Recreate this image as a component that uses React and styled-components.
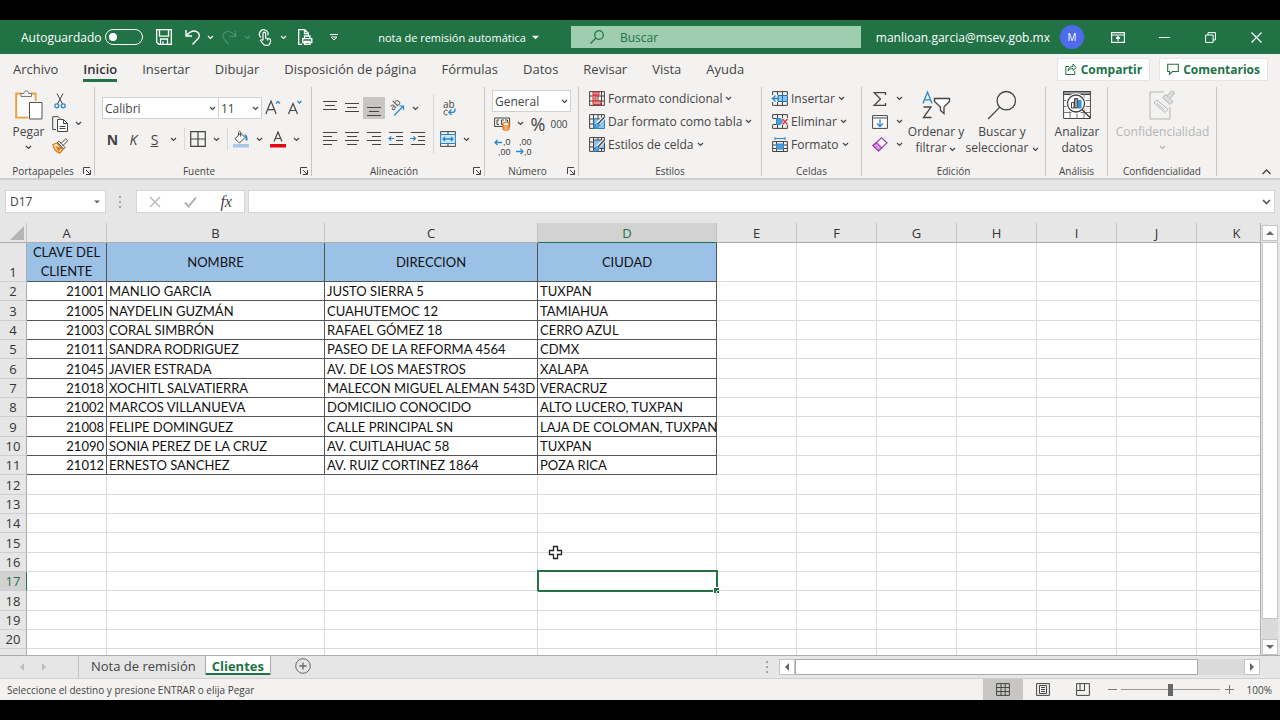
import React, { useState } from "react";
import styled, { createGlobalStyle, css } from "styled-components";

const GREEN = "#217346";
const BLUE = "#2b88c8";
const INK = "#444";

const COLUMNS = [
  { name: "A", width: 80 },
  { name: "B", width: 218 },
  { name: "C", width: 213 },
  { name: "D", width: 179 },
  { name: "E", width: 80 },
  { name: "F", width: 80 },
  { name: "G", width: 80 },
  { name: "H", width: 80 },
  { name: "I", width: 80 },
  { name: "J", width: 80 },
  { name: "K", width: 80 },
];

const HEADINGS = ["CLAVE DEL CLIENTE", "NOMBRE", "DIRECCION", "CIUDAD"];

const CLIENTS = [
  ["21001", "MANLIO GARCIA", "JUSTO SIERRA 5", "TUXPAN"],
  ["21005", "NAYDELIN GUZMÁN", "CUAHUTEMOC 12", "TAMIAHUA"],
  ["21003", "CORAL SIMBRÓN", "RAFAEL GÓMEZ 18", "CERRO AZUL"],
  ["21011", "SANDRA RODRIGUEZ", "PASEO DE LA REFORMA 4564", "CDMX"],
  ["21045", "JAVIER ESTRADA", "AV. DE LOS MAESTROS", "XALAPA"],
  ["21018", "XOCHITL SALVATIERRA", "MALECON MIGUEL ALEMAN 543D", "VERACRUZ"],
  ["21002", "MARCOS VILLANUEVA", "DOMICILIO CONOCIDO", "ALTO LUCERO, TUXPAN"],
  ["21008", "FELIPE DOMINGUEZ", "CALLE PRINCIPAL SN", "LAJA DE COLOMAN, TUXPAN"],
  ["21090", "SONIA PEREZ DE LA CRUZ", "AV. CUITLAHUAC 58", "TUXPAN"],
  ["21012", "ERNESTO SANCHEZ", "AV. RUIZ CORTINEZ 1864", "POZA RICA"],
];

const ROW_COUNT = 21;
const MENU = [
  "Archivo",
  "Inicio",
  "Insertar",
  "Dibujar",
  "Disposición de página",
  "Fórmulas",
  "Datos",
  "Revisar",
  "Vista",
  "Ayuda",
];

/* ---------- icons ---------- */

const Icon = ({ w = 16, h = 16, box, color = INK, sw = 1, children }) => (
  <svg
    width={w}
    height={h}
    viewBox={box || `0 0 ${w} ${h}`}
    fill="none"
    stroke={color}
    strokeWidth={sw}
    aria-hidden="true"
  >
    {children}
  </svg>
);

const Chevron = ({ color = INK }) => (
  <Icon w={7} h={5} color={color} sw={1.2}>
    <path d="M1 1l2.500 2.500L6 1" />
  </Icon>
);

const SaveIcon = () => (
  <Icon color="#fff" sw={1.3}>
    <path d="M.7.7h14.600v14.600H2.700l-2-2zM3.500.7v6.500h9V.7M4.500 15v-5h7v5M7 12.500V15" />
  </Icon>
);

const UndoIcon = () => (
  <Icon color="#fff" sw={1.4}>
    <path d="M1 1v6h6M1.300 6.700C5 2.500 9 1 12 2.800c3 1.900 3 5 .5 7.500L7.500 15.500" />
  </Icon>
);

const RedoIcon = () => (
  <Icon color="#4f9470" sw={1.2}>
    <path d="M14.500 1.500v6h-6M14.300 7C11 3 7.500 1.500 4.300 3.300c-3 1.900-3 5-.5 7.500L7.500 15" />
  </Icon>
);

const TouchIcon = () => (
  <Icon w={14} h={17} color="#fff" sw={1.2}>
    <path d="M3 8.500A4.300 4.300 0 1 1 9.800 6.500M5 11V4.500a1.300 1.300 0 0 1 2.600 0V9l4 .9c1 .3 1.200 1 1 2l-.6 2.400c-.4 1.300-1.200 2-2.500 2H7.600c-1 0-1.700-.4-2.300-1.200L2.400 11.500c.6-1 1.600-1 2.600 0M9.500 9.500v2" />
  </Icon>
);

const PrintIcon = () => (
  <Icon color="#fff" sw={1.3}>
    <path d="M5 15.300H1.700V.7h6l3.600 3.600V6.500M7.500.7v4h3.800M7.500 9.700V7H13v2.700M5.800 9.700h9v4h-9zM7.500 12.500v2.800H13v-2.800z" />
  </Icon>
);

const SearchIcon = ({ size = 14, color = GREEN, sw = 1.2 }) => (
  <Icon w={size} h={size} box="0 0 14 14" color={color} sw={sw}>
    <circle cx="9" cy="5" r="4.300" />
    <path d="M6 8L.5 13.500" />
  </Icon>
);

const RibbonDisplayIcon = () => (
  <Icon w={14} h={11} color="#fff" sw={1.2}>
    <path d="M.6.6h12.800v9.800H.6zM.6 3h12.800M7 9V4.500M5 6.500l2-2 2 2" />
  </Icon>
);

const ShareIcon = () => (
  <Icon w={12} h={12} color={GREEN}>
    <path d="M4 3.500H.8v8h9V8M3 8c.3-3 2-4.500 5-4.500V1l3.300 3.500L8 7.500V5.500C5.500 5.500 4 6.300 3 8z" />
  </Icon>
);

const CommentIcon = () => (
  <Icon w={12} h={12} color={GREEN} sw={1.1}>
    <path d="M.7 1.200h10.600v7.300H5.500l-3 2.700V8.500H.7z" />
  </Icon>
);

const PasteIcon = () => (
  <Icon w={28} h={32}>
    <path d="M6 4.500H1.200v24H13" stroke="#e9a13b" strokeWidth="2" />
    <path d="M16 4.500h4.500V12" stroke="#e9a13b" strokeWidth="2" />
    <path d="M2.500 6h17v6H13v15.500H2.500z" fill="#fbfbfb" stroke="none" />
    <path d="M6 7.500v-3h3c0-3.500 4.500-3.500 4.500 0h3v3z" fill="#f4f4f4" stroke="#777" />
    <path d="M14.500 13.500h12.500v16.500H14.500z" fill="#fff" stroke="#555" />
  </Icon>
);

const CutIcon = () => (
  <Icon w={12} h={16}>
    <path d="M3 .5l5.500 10.500M9 .5L3.500 11" />
    <circle cx="2.800" cy="12.800" r="2" stroke={BLUE} strokeWidth="1.300" />
    <circle cx="9.200" cy="12.800" r="2" stroke={BLUE} strokeWidth="1.300" />
  </Icon>
);

const CopyIcon = () => (
  <Icon w={16} h={16}>
    <path d="M4 13.500H.7V.7h5.500l2 2" />
    <path d="M5.500 3.500h6l4 4v8h-10zM11.500 3.500v4h4M7.500 10.500h6M7.500 12.500h6" fill="#fff" />
  </Icon>
);

const BrushIcon = () => (
  <Icon w={17} h={16}>
    <path d="M1 6.500l4-1.500 6 6.500-3 3.500c-3-.5-6-4-7-8.500z" fill="#fbe3c8" stroke="#e07b1a" strokeWidth="1.300" />
    <path d="M3.500 8l6 2-3 4z" fill="#e07b1a" stroke="none" />
    <path d="M5.500 4.500l1.500-1.300 6 6.300-1.500 1.500zM9 5.500L13.700.8l2 2L11 7.500" fill="#fff" />
  </Icon>
);

const GrowFontIcon = ({ shrink }) => (
  <Icon w={16} h={16}>
    <path
      d={shrink ? "M1.500 14L6 3.500 10.500 14M3 10.500h6" : "M.8 14L6 1l5.200 13M2.600 9.700h6.800"}
      strokeWidth="1.200"
    />
    <path d={shrink ? "M10.500 1l2 2 2-2" : "M11 3.500l2-2 2 2"} stroke={BLUE} strokeWidth="1.300" />
  </Icon>
);

const BordersIcon = () => (
  <Icon sw={1.2}>
    <path d="M.7.7h14.600v14.600H.7zM8 .7v14.600M.7 8h14.600" />
  </Icon>
);

const FillIcon = () => (
  <Icon w={18} h={17}>
    <path d="M8.500 2L3 7.800l4.500 4.200L13 6.500zM6.500 4V1.500c0-1.300 2.200-1.300 2.200 0v4" fill="#fff" />
    <path d="M12.500 4.500c2-.3 2.300 2.500 2 5" stroke={BLUE} strokeWidth="2" />
    <path d="M1 13h16v3.500H1z" fill="#a9c7e8" stroke="none" />
  </Icon>
);

const FontColorIcon = () => (
  <Icon w={16} h={17}>
    <path d="M4 10.500L8 1l4 9.500M5.300 7.500h5.400" strokeWidth="1.200" />
    <path d="M0 13h16v3.500H0z" fill="#e30613" stroke="none" />
  </Icon>
);

const LINES = {
  top: ["M1 1.500h14", "M3 5.500h10", "M1 9.500h14"],
  middle: ["M1 3.500h14", "M3 7.500h10", "M1 11.500h14"],
  bottom: ["M1 7.500h14", "M3 11.500h10", "M1 15.500h14"],
  left: ["M1 1.500h14", "M1 5.500h9", "M1 9.500h14", "M1 13.500h9"],
  center: ["M1 1.500h14", "M3 5.500h10", "M1 9.500h14", "M3 13.500h10"],
  right: ["M1 1.500h14", "M6 5.500h9", "M1 9.500h14", "M6 13.500h9"],
  outdent: ["M1 1.500h14", "M8 5.500h7", "M8 9.500h7", "M1 13.500h14"],
  indent: ["M1 1.500h14", "M8 5.500h7", "M8 9.500h7", "M1 13.500h14"],
};

const LinesIcon = ({ kind }) => (
  <Icon sw={1.2}>
    <path d={LINES[kind].join("")} />
    {kind === "outdent" && <path d="M6.500 7.500H1M3.200 5.300L1 7.500l2.200 2.200" stroke={BLUE} />}
    {kind === "indent" && <path d="M0 7.500h5.500M3.300 5.300L5.500 7.500l-2.200 2.200" stroke={BLUE} />}
  </Icon>
);

const OrientationIcon = () => (
  <Icon w={17} h={16}>
    <text transform="translate(5 11) rotate(-45)" fontSize="10" fill={INK} stroke="none">
      ab
    </text>
    <path d="M6 15.500L15.500 6M11.500 6h4v4" stroke={BLUE} strokeWidth="1.200" />
  </Icon>
);

const WrapIcon = () => (
  <Icon w={16} h={17}>
    <text x="2" y="8" fontSize="10" fill={INK} stroke="none">
      ab
    </text>
    <path d="M6.500 10.500c-1.500-1-3.500-.3-3.500 2s2 3 3.500 2" />
    <path d="M14 8.500v1.500c0 1.500-1 2.300-2.500 2.300H8M10.500 9.500l-2.700 2.800L10.500 15" stroke={BLUE} strokeWidth="1.300" />
  </Icon>
);

const MergeIcon = () => (
  <Icon>
    <path d="M.6 3.500h14.800v9H.6z" fill="#cfe6f7" stroke={BLUE} />
    <path d="M.6 3.500V.6h14.800v2.900M8 .6v2.900M.6 12.500v2.900h14.800v-2.900M8 12.500v2.900" />
    <path d="M3 8h10M5 6L3 8l2 2M11 6l2 2-2 2" stroke={BLUE} strokeWidth="1.300" />
  </Icon>
);

const MoneyIcon = () => (
  <Icon w={17} h={14}>
    <path d="M.6 1h15v8.500H.6z" />
    <path d="M5 3H3v4.500h2M10 3H7.500v4.500H9M11 3h2.500v2" />
    <path d="M9 6.500c0-1.500 6-1.500 6 0v5.500c0 1.500-6 1.500-6 0z" fill="#fff" stroke="#e07b1a" strokeWidth="1.300" />
    <path d="M9 8.300c1 1 5 1 6 0M9 10.300c1 1 5 1 6 0" stroke="#e07b1a" strokeWidth="1.300" />
  </Icon>
);

const DecimalIcon = ({ more }) => (
  <Icon w={17} h={18}>
    <SmallText x={more ? 9 : 4} y="7">
      {more ? ",0" : ",00"}
    </SmallText>
    <SmallText x={more ? 4 : 9} y="17">
      {more ? ",00" : ",0"}
    </SmallText>
    <path
      d={more ? "M8 4.500H1M3.500 2L1 4.500 3.500 7" : "M1 13.500h7M5.500 11L8 13.500 5.500 16"}
      stroke={BLUE}
      strokeWidth="1.300"
    />
  </Icon>
);

const GridLines = () => (
  <path d="M.6.6h14.800v13.800H.6zM.6 5h14.800M.6 10h14.800M4.500.6v13.800M9 .6v13.800M12.500.6v13.800" />
);

const CondFormatIcon = () => (
  <Icon w={16} h={15}>
    <GridLines />
    <path d="M4 1h6v3H4zM4 4h3v6H4zM4 10h8v3.500H4z" fill="#f08a8f" stroke="#d13438" />
  </Icon>
);

const TableFormatIcon = ({ full }) => (
  <Icon w={16} h={15}>
    <GridLines />
    <path
      d={full ? "M4.500 3h11v8.500h-11z" : "M5 5h10.500v9.500H5z"}
      fill="#8fc2ea"
      stroke={full ? INK : BLUE}
    />
    <path d="M15.500 3L7 11.500" stroke="#fff" strokeWidth="3.500" />
    <path d="M15.500 3L8.500 10.500" strokeWidth="1.500" />
    <path d="M9 9.500c-2-.5-3 1-3 2.500 0 1-.7 1.500-1.500 2 3 .7 5.500-.8 6-3z" fill="#5aa5dd" stroke={BLUE} />
  </Icon>
);

const CellsIcon = ({ kind }) => (
  <Icon w={16} h={15}>
    {kind === "format" ? (
      <>
        <path d="M.6 4.500h14.800v10H.6zM4.500 4.500v10M11.500 4.500v10M.6 8h14.800M.6 11.500h14.800" />
        <path d="M4.500 7h7v5h-7z" fill="#4ba0e0" stroke={BLUE} />
        <path d="M3 1.500h10M3 0v3M13 0v3" stroke={BLUE} />
      </>
    ) : (
      <>
        <path d="M.6 4V.6h14.800V4M5.500.6V4M10.500.6V4M.6 11v3.400h14.800V11M5.500 11v3.400M10.500 11v3.400" />
        {kind === "insert" ? (
          <>
            <path d="M6 4.500h9.400v6H6zM10.500 4.500v6" fill="#8cc4f0" stroke="#1c6fb0" />
            <path d="M7 7.500H.5M3.500 4.500l-3 3 3 3" stroke={BLUE} strokeWidth="1.300" />
          </>
        ) : (
          <>
            <path d="M.6 4.500h4M.6 10.500h4" />
            <path d="M4.500 4.500h4l2 3-2 3h-4z" fill="#4ba0e0" stroke={BLUE} />
            <path d="M10.500 5l5 5.500M15.500 5l-5 5.500" stroke="#e0393e" strokeWidth="1.400" />
          </>
        )}
      </>
    )}
  </Icon>
);

const SumIcon = () => (
  <Icon w={14} h={14} sw={1.3}>
    <path d="M12.500 3V.7H1.200L7.500 7l-6.300 6.300h11.300V11" />
  </Icon>
);

const FillDownIcon = () => (
  <Icon w={16} h={14}>
    <path d="M.6.6h14.800v12.800H.6zM.6 3h14.800" fill="#fff" />
    <path d="M8 4.500v7M5 8.500l3 3 3-3" stroke={BLUE} strokeWidth="1.300" />
  </Icon>
);

const EraserIcon = () => (
  <Icon w={16} h={15} color="#9a3fb0" sw={1.2}>
    <path d="M1 8.500L9.500.8l5.500 5-8.500 8.200z" fill="#fff" />
    <path d="M1 8.500l3.500-3L9.800 11l-3.300 3z" fill="#dc9be6" />
  </Icon>
);

const SortIcon = () => (
  <Icon w={28} h={28} sw={1.3}>
    <path d="M1 12.500L5.500 1 10 12.500M2.500 8.800h6" stroke={BLUE} />
    <path d="M1.500 16h7.500L1.500 26.500h8" />
    <path d="M12.500 7.500h15v3L22 16v6.500l-3.500-3V16l-6-5.500z" fill="#fff" />
  </Icon>
);

const AnalyzeIcon = () => (
  <Icon w={28} h={29}>
    <path d="M.6 1h26.800v27H.6z" fill="#fff" />
    <path d="M.6 1h26.800v3H.6z" fill="#999" />
    <path d="M.6 10h26.800M.6 16h26.800M.6 22h26.800M7 4v24M14 4v24M21 4v24" stroke="#777" />
    <circle cx="13" cy="13" r="8.700" fill="#fff" stroke="#fff" strokeWidth="3" />
    <circle cx="13" cy="13" r="8.500" fill="#fff" strokeWidth="1.300" />
    <path d="M19 19l8.500 8.500" strokeWidth="1.500" />
    <path d="M8.500 12h2.500v5.500H8.500z" />
    <path d="M11.500 8h3v9.500h-3z" fill="#9a9a9a" />
    <path d="M15 10h3v7.500h-3z" fill="#3f97d8" stroke={BLUE} />
  </Icon>
);

const SensitivityIcon = () => (
  <Icon w={28} h={30} color="#b5b5b5">
    <path d="M15 2H1v27h20V17" />
    <path d="M5 13l3-3 11 9.500-3 3zM8 13.500l7.500 6.500" />
    <path d="M13.500 7.500l3-3 7.500 7-3 3z" fill="#ddd" />
    <path d="M18 6l4-4.500c2-1 4 .5 3 2.500l-4 4.500" fill="#ddd" />
  </Icon>
);

const LauncherIcon = () => (
  <Icon w={8} h={8}>
    <path d="M.5 7V.5H7M3 3l4 4M7.500 3v4.500H3" />
  </Icon>
);

const ViewIcon = ({ kind }) => (
  <Icon w={14} h={13}>
    <path d="M.6.6h12.800v11.800H.6z" />
    {kind === "normal" && <path d="M.6 4.500h12.800M.6 8.500h12.800M5 .6v11.800M9.200.6v11.800" />}
    {kind === "page" && <path d="M3.500 2.500h7v8h-7zM5 4.500h4M5 6.500h4M5 8.500h4" />}
    {kind === "breaks" && <path d="M4 .6v7M8.500.6v7M.6 7.500h8" />}
  </Icon>
);

const Triangle = ({ dir, color = "#666", size = 8 }) => {
  const paths = {
    up: "M0 6l4-4 4 4z",
    down: "M0 2l4 4 4-4z",
    left: "M6 0L2 4l4 4z",
    right: "M2 0l4 4-4 4z",
  };
  return (
    <svg width={size} height={size} viewBox="0 0 8 8" fill={color} aria-hidden="true">
      <path d={paths[dir]} />
    </svg>
  );
};

/* ---------- page ---------- */

export default function App() {
  const [activeMenu, setActiveMenu] = useState("Inicio");
  const [sheet, setSheet] = useState("Clientes");
  const [zoom, setZoom] = useState(100);

  return (
    <Screen>
      <GlobalStyle />
      <TitleBar>
        <QuickAccess>
          <AutoSave>
            Autoguardado
            <Toggle type="checkbox" role="switch" />
          </AutoSave>
          <TitleButton $w={32} aria-label="Guardar">
            <SaveIcon />
          </TitleButton>
          <TitleButton $w={25} aria-label="Deshacer">
            <UndoIcon />
          </TitleButton>
          <TitleButton $w={10} aria-label="Opciones de deshacer">
            <Chevron color="#fff" />
          </TitleButton>
          <TitleButton $w={28} aria-label="Rehacer" disabled>
            <RedoIcon />
          </TitleButton>
          <TitleButton $w={8} aria-label="Opciones de rehacer" disabled>
            <Chevron color="#4f9470" />
          </TitleButton>
          <TitleButton $w={28} aria-label="Modo táctil">
            <TouchIcon />
          </TitleButton>
          <TitleButton $w={8} aria-label="Opciones de modo táctil">
            <Chevron color="#fff" />
          </TitleButton>
          <TitleButton $w={36} aria-label="Vista previa de impresión">
            <PrintIcon />
          </TitleButton>
          <TitleButton $w={22} aria-label="Personalizar barra">
            <Icon w={8} h={7} color="#fff">
              <path d="M0 .5h8M1 3l3 3 3-3z" />
            </Icon>
          </TitleButton>
        </QuickAccess>
        <FileName>
          nota de remisión automática
          <Triangle dir="down" color="#fff" size={7} />
        </FileName>
        <SearchBox>
          <SearchIcon />
          <input type="search" placeholder="Buscar" aria-label="Buscar" />
        </SearchBox>
        <Account>
          <span>manlioan.garcia@msev.gob.mx</span>
          <Avatar>M</Avatar>
          <TitleButton $w={46} aria-label="Opciones de la cinta">
            <RibbonDisplayIcon />
          </TitleButton>
          <TitleButton $w={46} aria-label="Minimizar">
            <Icon w={11} h={11} color="#fff">
              <path d="M0 5.500h11" />
            </Icon>
          </TitleButton>
          <TitleButton $w={46} aria-label="Restaurar">
            <Icon w={11} h={11} color="#fff">
              <path d="M.6 3h7.500v7.400H.6zM3 3V.6h7.400V8H8" />
            </Icon>
          </TitleButton>
          <TitleButton $w={46} aria-label="Cerrar">
            <Icon w={11} h={11} color="#fff" sw={1.2}>
              <path d="M.5.5l10 10M10.500.5l-10 10" />
            </Icon>
          </TitleButton>
        </Account>
      </TitleBar>

      <MenuBar>
        {MENU.map((item) => (
          <MenuItem key={item} $active={item === activeMenu} onClick={() => setActiveMenu(item)}>
            {item}
          </MenuItem>
        ))}
        <MenuActions>
          <ActionButton>
            <ShareIcon />
            Compartir
          </ActionButton>
          <ActionButton>
            <CommentIcon />
            Comentarios
          </ActionButton>
        </MenuActions>
      </MenuBar>

      <Ribbon>
        <Group $w={95} title="Portapapeles" launcher>
          <LargeButton $w={43}>
            <PasteIcon />
            <span>Pegar</span>
            <Chevron />
          </LargeButton>
          <Stack $low>
            <Tool $w={20} aria-label="Cortar">
              <CutIcon />
            </Tool>
            <Row>
              <Tool $w={20} aria-label="Copiar">
                <CopyIcon />
              </Tool>
              <Arrow />
            </Row>
            <Tool $w={20} aria-label="Copiar formato">
              <BrushIcon />
            </Tool>
          </Stack>
        </Group>

        <Group $w={217} title="Fuente" launcher>
          <Rows>
            <Row>
              <Picker label="Fuente" value="Calibri" $w={117} />
              <Picker label="Tamaño de fuente" value="11" $w={43} />
              <Tool $w={22} aria-label="Aumentar tamaño">
                <GrowFontIcon />
              </Tool>
              <Tool $w={22} aria-label="Disminuir tamaño">
                <GrowFontIcon shrink />
              </Tool>
            </Row>
            <Row>
              <Tool $w={21} aria-label="Negrita">
                <b>N</b>
              </Tool>
              <Tool $w={21} aria-label="Cursiva">
                <i>K</i>
              </Tool>
              <Tool $w={21} aria-label="Subrayado">
                <u>S</u>
              </Tool>
              <Arrow />
              <Separator />
              <Tool $w={20} aria-label="Bordes">
                <BordersIcon />
              </Tool>
              <Arrow />
              <Separator />
              <Tool $w={20} aria-label="Color de relleno">
                <FillIcon />
              </Tool>
              <Arrow />
              <Tool $w={21} aria-label="Color de fuente">
                <FontColorIcon />
              </Tool>
              <Arrow />
            </Row>
          </Rows>
        </Group>

        <Group $w={173} title="Alineación" launcher>
          <Rows>
            <Row>
              {["top", "middle", "bottom"].map((kind) => (
                <Tool key={kind} $w={22} $on={kind === "bottom"} aria-label={"Alinear " + kind}>
                  <LinesIcon kind={kind} />
                </Tool>
              ))}
              <Tool $w={22} aria-label="Orientación">
                <OrientationIcon />
              </Tool>
              <Arrow />
            </Row>
            <Row>
              {["left", "center", "right", "outdent", "indent"].map((kind) => (
                <Tool key={kind} $w={22} aria-label={"Alinear " + kind}>
                  <LinesIcon kind={kind} />
                </Tool>
              ))}
            </Row>
          </Rows>
          <Separator $tall />
          <Rows>
            <Row>
              <Tool $w={22} aria-label="Ajustar texto">
                <WrapIcon />
              </Tool>
            </Row>
            <Row>
              <Tool $w={20} aria-label="Combinar y centrar">
                <MergeIcon />
              </Tool>
              <Arrow />
            </Row>
          </Rows>
        </Group>

        <Group $w={94} title="Número" launcher>
          <Stack $low>
            <Picker label="Formato de número" value="General" $w={79} />
            <Row>
              <Tool $w={20} aria-label="Formato de contabilidad">
                <MoneyIcon />
              </Tool>
              <Arrow />
              <Tool $w={20} $size={18} aria-label="Porcentaje">
                %
              </Tool>
              <Tool $w={22} $size={10} aria-label="Millares">
                000
              </Tool>
            </Row>
            <Row>
              <Tool $w={20} aria-label="Aumentar decimales">
                <DecimalIcon more />
              </Tool>
              <Tool $w={22} aria-label="Disminuir decimales">
                <DecimalIcon />
              </Tool>
            </Row>
          </Stack>
        </Group>

        <Group $w={183} title="Estilos">
          <Stack>
            <TextTool>
              <CondFormatIcon />
              Formato condicional
              <Chevron />
            </TextTool>
            <TextTool>
              <TableFormatIcon />
              Dar formato como tabla
              <Chevron />
            </TextTool>
            <TextTool>
              <TableFormatIcon full />
              Estilos de celda
              <Chevron />
            </TextTool>
          </Stack>
        </Group>

        <Group $w={100} title="Celdas">
          <Stack>
            <TextTool $spread>
              <CellsIcon kind="insert" />
              Insertar
              <Chevron />
            </TextTool>
            <TextTool $spread>
              <CellsIcon kind="delete" />
              Eliminar
              <Chevron />
            </TextTool>
            <TextTool $spread>
              <CellsIcon kind="format" />
              Formato
              <Chevron />
            </TextTool>
          </Stack>
        </Group>

        <Group $w={184} title="Edición">
          <Stack>
            <Row>
              <Tool $w={22} aria-label="Autosuma">
                <SumIcon />
              </Tool>
              <Arrow />
            </Row>
            <Row>
              <Tool $w={22} aria-label="Rellenar">
                <FillDownIcon />
              </Tool>
              <Arrow />
            </Row>
            <Row>
              <Tool $w={22} aria-label="Borrar">
                <EraserIcon />
              </Tool>
              <Arrow />
            </Row>
          </Stack>
          <LargeButton $w={58}>
            <SortIcon />
            <span>Ordenar y</span>
            <span>
              filtrar <Chevron />
            </span>
          </LargeButton>
          <LargeButton $w={74}>
            <SearchIcon size={30} color={INK} sw={0.6} />
            <span>Buscar y</span>
            <span>
              seleccionar <Chevron />
            </span>
          </LargeButton>
        </Group>

        <Group $w={62} title="Análisis">
          <LargeButton $w={48}>
            <AnalyzeIcon />
            <span>Analizar</span>
            <span>datos</span>
          </LargeButton>
        </Group>

        <Group $w={109} title="Confidencialidad">
          <LargeButton $w={95} disabled>
            <SensitivityIcon />
            <span>Confidencialidad</span>
            <Chevron color="#b5b5b5" />
          </LargeButton>
        </Group>

        <Collapse aria-label="Contraer la cinta">
          <Icon w={9} h={6} sw={1.3}>
            <path d="M.5 5l4-4 4 4" />
          </Icon>
        </Collapse>
      </Ribbon>

      <FormulaBar>
        <NameBox>
          <input defaultValue="D17" aria-label="Cuadro de nombres" />
          <Triangle dir="down" size={6} />
        </NameBox>
        <Dots />
        <FormulaButtons>
          <button aria-label="Cancelar">
            <Icon w={12} h={12} color="#b5b5b5" sw={1.3}>
              <path d="M1 1l10 10M11 1L1 11" />
            </Icon>
          </button>
          <button aria-label="Introducir">
            <Icon w={13} h={12} color="#b5b5b5" sw={2}>
              <path d="M1 6.500L4.500 10.500 12 1.500" />
            </Icon>
          </button>
          <button aria-label="Insertar función">
            <em>fx</em>
          </button>
        </FormulaButtons>
        <FormulaInput>
          <input aria-label="Barra de fórmulas" />
          <Icon w={9} h={6} color="#555" sw={1.6}>
            <path d="M1 1l3.500 3.500L8 1" />
          </Icon>
        </FormulaInput>
      </FormulaBar>

      <Workspace>
        <SheetPane>
          <Sheet>
            <colgroup>
              <col width={27} />
              {COLUMNS.map((col) => (
                <col key={col.name} width={col.width} />
              ))}
            </colgroup>
            <thead>
              <tr>
                <Corner>
                  <svg width="14" height="14" viewBox="0 0 14 14" fill="#b4b4b4" aria-hidden="true">
                    <path d="M14 0v14H0z" />
                  </svg>
                </Corner>
                {COLUMNS.map((col) => (
                  <ColumnHead key={col.name} scope="col" $on={col.name === "D"}>
                    {col.name}
                  </ColumnHead>
                ))}
              </tr>
            </thead>
            <tbody>
              {Array.from({ length: ROW_COUNT }, (_, i) => (
                <SheetRow key={i} number={i + 1} />
              ))}
            </tbody>
          </Sheet>
        </SheetPane>
        <VerticalScroll>
          <ScrollButton aria-label="Subir">
            <Triangle dir="up" />
          </ScrollButton>
          <VerticalThumb />
          <VerticalTrack />
          <ScrollButton aria-label="Bajar">
            <Triangle dir="down" />
          </ScrollButton>
        </VerticalScroll>
      </Workspace>

      <SheetBar>
        <SheetNav>
          <button aria-label="Hoja anterior">
            <Triangle dir="left" color="#bdbdbd" />
          </button>
          <button aria-label="Hoja siguiente">
            <Triangle dir="right" color="#bdbdbd" />
          </button>
        </SheetNav>
        {["Nota de remisión", "Clientes"].map((name) => (
          <SheetTab key={name} $active={name === sheet} onClick={() => setSheet(name)}>
            {name}
          </SheetTab>
        ))}
        <AddSheet aria-label="Hoja nueva">
          <Icon w={16} h={16} color="#666">
            <circle cx="8" cy="8" r="7.300" />
            <path d="M8 4.500v7M4.500 8h7" strokeWidth="1.300" />
          </Icon>
        </AddSheet>
        <HorizontalScroll>
          <Dots />
          <ScrollButton aria-label="Izquierda">
            <Triangle dir="left" />
          </ScrollButton>
          <HorizontalThumb />
          <HorizontalTrack />
          <ScrollButton aria-label="Derecha">
            <Triangle dir="right" />
          </ScrollButton>
        </HorizontalScroll>
      </SheetBar>

      <StatusBar>
        <p>Seleccione el destino y presione ENTRAR o elija Pegar</p>
        <ViewButton $on aria-label="Normal">
          <ViewIcon kind="normal" />
        </ViewButton>
        <ViewButton aria-label="Diseño de página">
          <ViewIcon kind="page" />
        </ViewButton>
        <ViewButton aria-label="Salto de página">
          <ViewIcon kind="breaks" />
        </ViewButton>
        <ZoomButton aria-label="Alejar" onClick={() => setZoom(Math.max(10, zoom - 10))}>
          <Icon w={9} h={9} color="#777">
            <path d="M0 4.500h9" />
          </Icon>
        </ZoomButton>
        <ZoomSlider
          type="range"
          min="10"
          max="190"
          value={zoom}
          onChange={(e) => setZoom(Number(e.target.value))}
          aria-label="Zoom"
        />
        <ZoomButton aria-label="Acercar" onClick={() => setZoom(Math.min(190, zoom + 10))}>
          <Icon w={9} h={9} color="#777">
            <path d="M0 4.500h9M4.500 0v9" />
          </Icon>
        </ZoomButton>
        <ZoomValue>{zoom}%</ZoomValue>
      </StatusBar>
    </Screen>
  );
}

const SheetRow = ({ number }) => {
  const values = number === 1 ? HEADINGS : CLIENTS[number - 2] || [];
  return (
    <tr>
      <RowHead scope="row" $on={number === 17}>
        {number}
      </RowHead>
      {COLUMNS.map((col, i) => {
        if (number === 1 && values[i]) {
          return <HeadingCell key={col.name}>{values[i]}</HeadingCell>;
        }
        return (
          <Cell
            key={col.name}
            $filled={Boolean(values[i])}
            $number={i === 0}
            $selected={number === 17 && col.name === "D"}
          >
            {values[i]}
            {number === 16 && col.name === "D" && (
              <Pointer width="16" height="16" viewBox="0 0 16 16" aria-hidden="true">
                <path
                  d="M5.500 1.500h4v4h4v4h-4v4h-4v-4h-4v-4h4z"
                  fill="#fff"
                  stroke="#222"
                  strokeWidth="1.300"
                />
              </Pointer>
            )}
          </Cell>
        );
      })}
    </tr>
  );
};

const Group = ({ title, launcher, children, $w }) => (
  <GroupBox $w={$w} aria-label={title}>
    <GroupBody>{children}</GroupBody>
    <GroupFoot>
      <span>{title}</span>
      {launcher && (
        <button aria-label={"Configuración de " + title}>
          <LauncherIcon />
        </button>
      )}
    </GroupFoot>
  </GroupBox>
);

const Picker = ({ label, value, $w }) => (
  <PickerBox $w={$w}>
    <select aria-label={label} defaultValue={value}>
      <option>{value}</option>
    </select>
    <Chevron />
  </PickerBox>
);

const Arrow = () => (
  <ArrowButton aria-label="Más opciones">
    <Chevron />
  </ArrowButton>
);

const GlobalStyle = createGlobalStyle`
  * {
    box-sizing: border-box;
  }
  body {
    margin: 0;
    background: #000;
    color: ${INK};
    font-family: "Open Sans", "Noto Sans", sans-serif;
    font-size: 12px;
  }
  button, input, select {
    margin: 0;
    padding: 0;
    border: 0;
    border-radius: 0;
    background: none;
    color: inherit;
    font: inherit;
    outline: none;
  }
  button {
    display: flex;
    align-items: center;
    justify-content: center;
    flex: none;
    white-space: nowrap;
  }
  svg {
    flex: none;
    overflow: visible;
  }
  p {
    margin: 0;
  }
`;

const Screen = styled.div`
  display: flex;
  flex-direction: column;
  height: 100vh;
  padding: 20px 0;
  overflow: hidden;
`;

const SmallText = styled.text`
  fill: ${INK};
  stroke: none;
  font-family: "Liberation Sans", sans-serif;
  font-size: 9px;
`;

const TitleBar = styled.header`
  display: grid;
  grid-template-columns: 346px 225px minmax(160px, 290px) 1fr;
  align-items: center;
  height: 34px;
  flex: none;
  background: ${GREEN};
  color: #fff;
`;

const QuickAccess = styled.div`
  display: flex;
  align-items: center;
  padding-left: 21px;
`;

const AutoSave = styled.label`
  display: flex;
  flex: none;
  align-items: center;
  justify-content: space-between;
  width: 122px;
  margin-right: 5px;
`;

const Toggle = styled.input`
  appearance: none;
  display: flex;
  align-items: center;
  width: 38px;
  height: 16px;
  padding: 0 3px;
  border: 1px solid #fff;
  border-radius: 8px;

  &::before {
    content: "";
    width: 8px;
    height: 8px;
    border-radius: 50%;
    background: #fff;
  }
  &:checked {
    justify-content: flex-end;
  }
`;

const TitleButton = styled.button`
  width: ${(p) => p.$w}px;
  height: 34px;
`;

const FileName = styled.button`
  gap: 6px;
  font-size: 11px;
`;

const SearchBox = styled.label`
  display: flex;
  align-items: center;
  gap: 16px;
  height: 22px;
  padding-left: 19px;
  background: #9fcdb0;
  color: ${GREEN};

  input {
    flex: 1;
    min-width: 0;
  }
  input::placeholder {
    color: ${GREEN};
    opacity: 1;
  }
`;

const Account = styled.div`
  display: flex;
  align-items: center;
  justify-content: flex-end;
  padding-right: 1px;
`;

const Avatar = styled.span`
  display: flex;
  align-items: center;
  justify-content: center;
  width: 24px;
  height: 24px;
  margin: 0 11px 0 10px;
  border-radius: 50%;
  background: #4f6bed;
  font-size: 10px;
`;

const MenuBar = styled.nav`
  display: flex;
  align-items: center;
  gap: 25px;
  height: 30px;
  flex: none;
  padding: 0 12px 0 13px;
  background: #f3f2f1;
`;

const MenuItem = styled.button`
  height: 26px;
  padding-top: 2px;
  border-bottom: 3px solid transparent;
  font-size: 13px;

  ${(p) =>
    p.$active &&
    css`
      border-color: ${GREEN};
      color: #333;
      font-weight: 600;
    `}
`;

const MenuActions = styled.div`
  display: flex;
  gap: 9px;
  margin-left: auto;
`;

const ActionButton = styled.button`
  gap: 4px;
  height: 23px;
  padding: 0 7px;
  border: 1px solid #e6e4e2;
  background: #fff;
  color: ${GREEN};
  font-weight: 700;
`;

const Ribbon = styled.section`
  display: flex;
  height: 96px;
  flex: none;
  border-bottom: 2px solid #d0cfce;
  background: #f3f2f1;
`;

const GroupBox = styled.div`
  display: flex;
  flex-direction: column;
  flex: none;
  width: ${(p) => p.$w}px;
  margin: 3px 0 2px;
  border-right: 1px solid #c8c6c4;
`;

const GroupBody = styled.div`
  display: flex;
  flex: 1;
  padding-left: 7px;
`;

const GroupFoot = styled.div`
  display: flex;
  align-items: center;
  height: 10px;
  padding: 0 3px;
  font-size: 10px;

  span {
    flex: 1;
    text-align: center;
  }
`;

const Stack = styled.div`
  display: flex;
  flex-direction: column;
  align-items: flex-start;
  padding-top: ${(p) => (p.$low ? 3 : 0)}px;

  > * {
    height: 23px;
  }
`;

const Rows = styled.div`
  display: flex;
  flex-direction: column;
  gap: 9px;
  padding-top: 10px;
`;

const Row = styled.div`
  display: flex;
  align-items: center;
`;

const Tool = styled.button`
  width: ${(p) => p.$w}px;
  height: 22px;
  background: ${(p) => (p.$on ? "#c8c6c4" : "none")};
  font-size: ${(p) => p.$size || 14}px;
`;

const ArrowButton = styled.button`
  width: 16px;
  height: 22px;
`;

const Separator = styled.span`
  width: 1px;
  height: ${(p) => (p.$tall ? 60 : 22)}px;
  margin: ${(p) => (p.$tall ? "7px 4px 0" : "0 3px")};
  background: #dcdad8;
`;

const PickerBox = styled.span`
  display: grid;
  align-items: center;
  width: ${(p) => p.$w}px;
  height: 22px;
  border: 1px solid #d2d0ce;
  background: #fff;

  select,
  svg {
    grid-area: 1 / 1;
  }
  select {
    appearance: none;
    padding-left: 2px;
  }
  svg {
    justify-self: end;
    margin-right: 2px;
    pointer-events: none;
  }
  & + & {
    border-left: 0;
  }
`;

const TextTool = styled.button`
  gap: 3px;
  padding-left: 3px;
  ${(p) =>
    p.$spread &&
    css`
      justify-content: flex-start;
      width: 76px;

      svg:last-child {
        margin-left: auto;
      }
    `}
`;

const LargeButton = styled.button`
  flex-direction: column;
  justify-content: flex-start;
  width: ${(p) => p.$w}px;
  padding-top: 2px;
  line-height: 16px;

  > svg:first-child {
    height: 32px;
    margin-bottom: 3px;
  }
  > svg:last-child {
    margin-top: 5px;
  }
  &:disabled {
    color: #b5b5b5;
  }
`;

const Collapse = styled.button`
  align-self: flex-end;
  width: 27px;
  height: 12px;
  margin-left: auto;
`;

const FormulaBar = styled.div`
  display: flex;
  align-items: center;
  flex: none;
  height: 43px;
  padding: 0 5px;
  background: #e6e6e6;
`;

const NameBox = styled.label`
  display: flex;
  align-items: center;
  width: 101px;
  height: 23px;
  padding: 0 5px 0 4px;
  border: 1px solid #d4d4d4;
  background: #fff;

  input {
    flex: 1;
    min-width: 0;
  }
`;

const Dots = styled.span`
  width: 2px;
  height: 12px;
  margin: 0 15px 0 13px;
  background: repeating-linear-gradient(#a5a5a5 0 2px, transparent 2px 5px);
`;

const FormulaButtons = styled.div`
  display: grid;
  grid-template-columns: repeat(3, 1fr);
  width: 109px;
  height: 23px;
  margin-right: 3px;
  border: 1px solid #d4d4d4;
  background: #fff;

  em {
    font-family: "Liberation Serif", serif;
    font-size: 16px;
  }
`;

const FormulaInput = styled.label`
  display: flex;
  align-items: center;
  flex: 1;
  height: 23px;
  padding: 0 3px;
  border: 1px solid #d4d4d4;
  background: #fff;

  input {
    flex: 1;
    min-width: 0;
  }
`;

const Workspace = styled.main`
  display: flex;
  flex: 1;
  min-height: 0;
  background: #e6e6e6;
`;

const SheetPane = styled.div`
  flex: 1;
  min-width: 0;
  overflow: hidden;
  border-right: 1px solid #ababab;
  background: #fff;
`;

const Sheet = styled.table`
  width: 0;
  table-layout: fixed;
  border-collapse: separate;
  border-spacing: 0;
  color: #111;
  font-family: Lato, Carlito, sans-serif;
  font-size: 13px;
  line-height: 18px;

  tbody tr {
    height: 19px;
  }
  tbody tr:nth-child(3n) {
    height: 20px;
  }
`;

const headBase = css`
  padding: 0;
  background: ${(p) => (p.$on ? "#d2d2d2" : "#e6e6e6")};
  color: ${(p) => (p.$on ? GREEN : "#333")};
  font-family: "Open Sans", "Noto Sans", sans-serif;
  font-weight: 400;
`;

const Corner = styled.td`
  padding: 0 2px 0 0;
  border-right: 1px solid #c4c4c4;
  border-bottom: 1px solid #ababab;
  background: #e6e6e6;
  text-align: right;
  line-height: 0;
`;

const ColumnHead = styled.th`
  ${headBase}
  height: 20px;
  border-right: 1px solid #c4c4c4;
  border-bottom: 1px solid ${(p) => (p.$on ? GREEN : "#ababab")};
`;

const RowHead = styled.th`
  ${headBase}
  border-right: 1px solid ${(p) => (p.$on ? GREEN : "#ababab")};
  border-bottom: 1px solid #cfcfcf;
  vertical-align: bottom;
`;

const Cell = styled.td`
  position: relative;
  padding: 0 2px;
  border-right: 1px solid ${(p) => (p.$filled ? "#555" : "#dadada")};
  border-bottom: 1px solid ${(p) => (p.$filled ? "#555" : "#dadada")};
  text-align: ${(p) => (p.$number ? "right" : "left")};
  white-space: nowrap;

  ${(p) =>
    p.$selected &&
    css`
      &::before {
        content: "";
        position: absolute;
        inset: -2px -2px -2px -1px;
        border: 2px solid ${GREEN};
      }
      &::after {
        content: "";
        position: absolute;
        right: -3px;
        bottom: -3px;
        width: 5px;
        height: 5px;
        border: 1px solid #fff;
        border-width: 1px 0 0 1px;
        background: ${GREEN};
      }
    `}
`;

const HeadingCell = styled.td`
  height: 39px;
  padding: 0 4px;
  border-right: 1px solid #555;
  border-bottom: 1px solid #555;
  background: #9bc2e6;
  text-align: center;
  line-height: 19px;
`;

const Pointer = styled.svg`
  position: absolute;
  top: -8px;
  left: 10px;
`;

const VerticalScroll = styled.div`
  display: flex;
  flex-direction: column;
  flex: none;
  width: 16px;
  margin: 2px 2px 0 1px;
`;

const ScrollButton = styled.button`
  width: 16px;
  height: 16px;
  border: 1px solid #c4c4c4;
  background: #fff;
`;

const VerticalThumb = styled.div`
  flex: 19;
  margin-top: 1px;
  border: 1px solid #c4c4c4;
  background: #fff;
`;

const VerticalTrack = styled.div`
  flex: 1;
  background: #dadada;
`;

const SheetBar = styled.div`
  display: flex;
  flex: none;
  height: 23px;
  border-top: 1px solid #ababab;
  background: #e6e6e6;
  font-size: 13px;
`;

const SheetNav = styled.div`
  display: flex;
  align-items: center;
  width: 79px;
  padding-left: 11px;
  border-right: 1px solid #c4c4c4;

  button {
    width: 22px;
  }
`;

const SheetTab = styled.button`
  height: 19px;
  padding: 0 9px 0 12px;

  ${(p) =>
    p.$active &&
    css`
      padding: 0 6px;
      border: 1px solid #ababab;
      border-width: 0 1px;
      background: #fff;
      box-shadow: inset 0 -2px ${GREEN};
      color: ${GREEN};
      font-weight: 700;
    `}
`;

const AddSheet = styled.button`
  margin-left: 24px;
  height: 20px;
`;

const HorizontalScroll = styled.div`
  display: flex;
  align-items: center;
  width: 496px;
  height: 21px;
  margin: 0 20px 0 auto;

  ${Dots} {
    margin: 0 11px 0 2px;
  }
`;

const HorizontalThumb = styled.div`
  flex: 402;
  height: 16px;
  border: 1px solid #ababab;
  background: #fff;
`;

const HorizontalTrack = styled.div`
  flex: 46;
  height: 16px;
  background: #dadada;
`;

const StatusBar = styled.footer`
  display: flex;
  align-items: center;
  flex: none;
  height: 22px;
  padding: 0 8px 0 7px;
  border-top: 1px solid #d0d0d0;
  background: #f3f2f1;
  font-size: 10px;

  p {
    flex: 1;
  }
`;

const ViewButton = styled.button`
  width: 40px;
  height: 21px;
  background: ${(p) => (p.$on ? "#c8c6c4" : "none")};
`;

const ZoomButton = styled.button`
  width: 18px;
  height: 21px;
`;

const ZoomSlider = styled.input`
  appearance: none;
  width: 99px;
  height: 12px;
  background: linear-gradient(#999, #999) center / 100% 1px no-repeat;

  &::-webkit-slider-thumb {
    appearance: none;
    width: 5px;
    height: 12px;
    background: #666;
  }
`;

const ZoomValue = styled.span`
  width: 34px;
  text-align: right;
`;
